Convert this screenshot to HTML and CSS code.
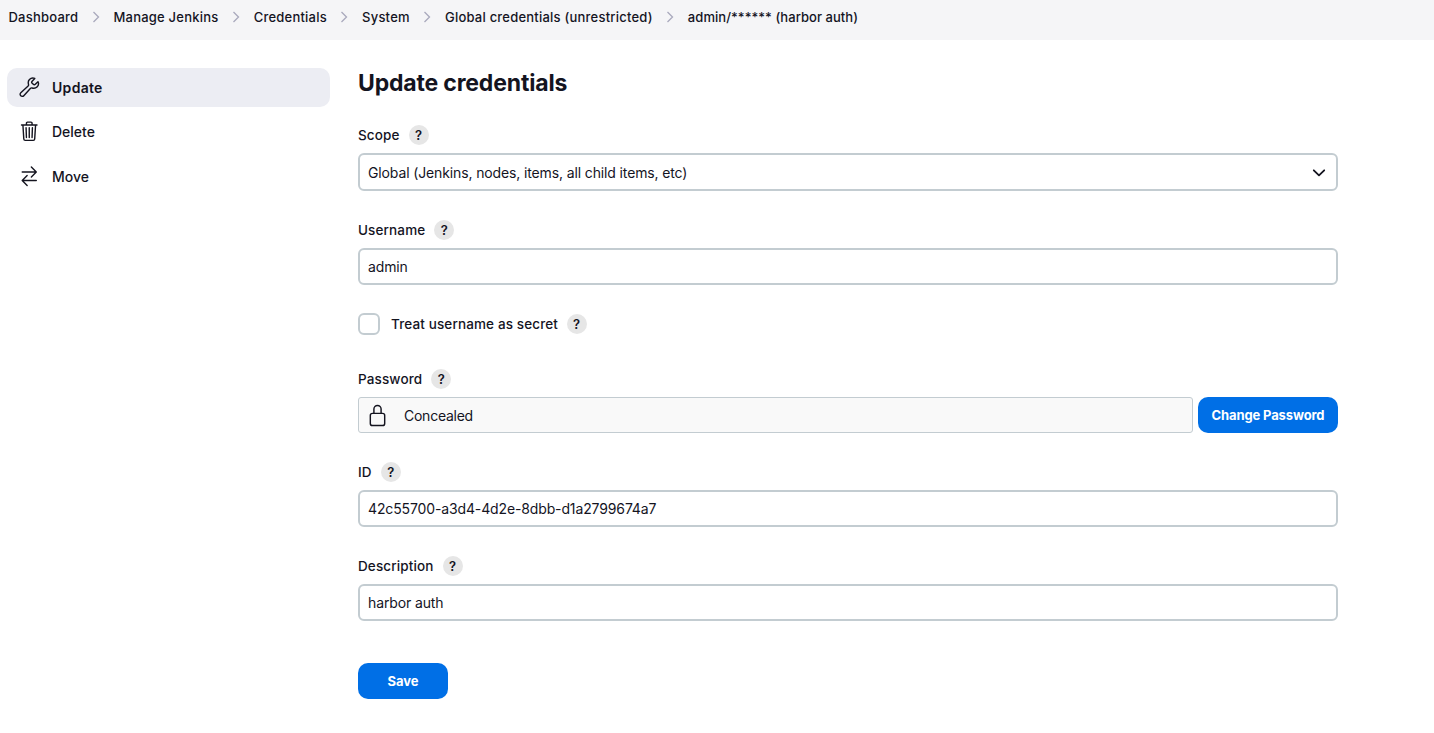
FILE: index.html
```
<!DOCTYPE html>
<html lang="en">
<head>
    <meta charset="UTF-8">
    <meta name="viewport" content="width=device-width, initial-scale=1.0">
    <title>Update credentials [Jenkins]</title>
    <link rel="stylesheet" href="styles.css">
</head>
<body>
    <nav class="breadcrumbs">
        <a href="#">Dashboard</a>
        <svg class="separator" viewBox="0 0 8 12"><path d="M1.5 1l5 5-5 5"/></svg>
        <a href="#">Manage Jenkins</a>
        <svg class="separator" viewBox="0 0 8 12"><path d="M1.5 1l5 5-5 5"/></svg>
        <a href="#">Credentials</a>
        <svg class="separator" viewBox="0 0 8 12"><path d="M1.5 1l5 5-5 5"/></svg>
        <a href="#">System</a>
        <svg class="separator" viewBox="0 0 8 12"><path d="M1.5 1l5 5-5 5"/></svg>
        <a href="#">Global credentials (unrestricted)</a>
        <svg class="separator" viewBox="0 0 8 12"><path d="M1.5 1l5 5-5 5"/></svg>
        <a class="current" href="#">admin/****** (harbor auth)</a>
    </nav>

    <div class="page-body">
        <aside class="side-panel">
            <a class="task task-active" href="#">
                <svg class="icon" viewBox="0 0 512 512"><path d="M393.87 190a32.1 32.1 0 01-45.25 0l-26.57-26.57a32.09 32.09 0 010-45.26L382.19 58a1 1 0 00-.3-1.64c-38.82-16.64-89.15-8.16-121.11 23.57-30.58 30.35-32.32 76-21.12 115.84a31.93 31.93 0 01-9.06 32.08L64 380a48.17 48.17 0 1068 68l153.86-167a31.93 31.93 0 0131.6-9.13c39.54 10.59 84.54 8.6 114.72-21.19 32.49-32 39.5-88.56 23.75-120.93a1 1 0 00-1.6-.26z"/></svg>
                <span>Update</span>
            </a>
            <a class="task" href="#">
                <svg class="icon" viewBox="0 0 512 512"><path d="M112 112l20 320c.95 18.49 14.4 32 32 32h184c17.67 0 30.87-13.51 32-32l20-320M80 112h352M192 112V72a23.93 23.93 0 0124-24h80a23.93 23.93 0 0124 24v40M256 176v224M184 176l8 224M328 176l-8 224"/></svg>
                <span>Delete</span>
            </a>
            <a class="task" href="#">
                <svg class="icon" viewBox="0 0 512 512"><path d="M304 48l112 112-112 112M398.87 160H96M208 464L96 352l112-112M114 352h302"/></svg>
                <span>Move</span>
            </a>
        </aside>

        <main class="main-panel">
            <h1>Update credentials</h1>
            <form onsubmit="return false">
                <div class="form-item">
                    <div class="form-label"><label for="scope">Scope</label><a class="help" href="#">?</a></div>
                    <div class="select">
                        <select id="scope" class="input">
                            <option>Global (Jenkins, nodes, items, all child items, etc)</option>
                        </select>
                        <svg class="chevron" viewBox="0 0 14 10"><path d="M1.8 2.3L7 7.4l5.2-5.1"/></svg>
                    </div>
                </div>
                <div class="form-item">
                    <div class="form-label"><label for="username">Username</label><a class="help" href="#">?</a></div>
                    <input id="username" class="input" type="text" value="admin">
                </div>
                <div class="form-item form-check">
                    <input id="secret" class="checkbox" type="checkbox">
                    <label class="secret-label" for="secret">Treat username as secret</label>
                    <a class="help" href="#">?</a>
                </div>
                <div class="form-item">
                    <div class="form-label"><span>Password</span><a class="help" href="#">?</a></div>
                    <div class="password-row">
                        <div class="concealed">
                            <svg class="icon" viewBox="0 0 512 512"><path d="M336 208v-95a80 80 0 00-160 0v95"/><rect x="96" y="208" width="320" height="272" rx="48"/></svg>
                            <span>Concealed</span>
                        </div>
                        <button class="button change-button" type="button">Change Password</button>
                    </div>
                </div>
                <div class="form-item">
                    <div class="form-label"><label for="id">ID</label><a class="help" href="#">?</a></div>
                    <input id="id" class="input" type="text" value="42c55700-a3d4-4d2e-8dbb-d1a2799674a7">
                </div>
                <div class="form-item">
                    <div class="form-label"><label for="description">Description</label><a class="help" href="#">?</a></div>
                    <input id="description" class="input" type="text" value="harbor auth">
                </div>
                <button class="button save-button" type="submit">Save</button>
            </form>
        </main>
    </div>
</body>
</html>
```
FILE: styles.css
```
* {
    box-sizing: border-box;
}

body {
    margin: 0;
    background: #fff;
    color: #14141f;
    font-family: Inter, "Liberation Sans", sans-serif;
    font-size: 14px;
    line-height: 20px;
}

a {
    color: inherit;
    text-decoration: none;
}

.breadcrumbs {
    display: flex;
    align-items: center;
    height: 40px;
    padding: 0 8.5px 6px;
    background: #f5f5f7;
    font-size: 13px;
    font-weight: 500;
    letter-spacing: 0.22px;
    white-space: nowrap;
}

.breadcrumbs .current {
    letter-spacing: 0.05px;
}

.separator {
    flex: none;
    width: 8px;
    height: 12px;
    margin: 0 13.6px;
    fill: none;
    stroke: #a9a9bd;
    stroke-width: 1.3;
}

.page-body {
    display: flex;
    padding: 28px 96px 0 7px;
}

.side-panel {
    width: 323px;
    margin-right: 28px;
}

.task {
    display: flex;
    align-items: center;
    gap: 12px;
    height: 39px;
    margin-bottom: 5.5px;
    padding: 0 10.5px;
    border-radius: 10px;
    font-weight: 500;
}

.task-active {
    background: #ecedf3;
    font-weight: 600;
    letter-spacing: 0.3px;
}

.icon {
    flex: none;
    width: 23px;
    height: 23px;
    fill: none;
    stroke: currentColor;
    stroke-width: 32;
    stroke-linecap: round;
    stroke-linejoin: round;
}

.task .icon {
    width: 22.5px;
    height: 22.5px;
    margin-bottom: 1px;
}

.main-panel {
    flex: 1;
}

h1 {
    margin: 0 0 27px;
    font-size: 23px;
    font-weight: 700;
    letter-spacing: -0.17px;
    line-height: 30px;
}

.form-item {
    margin-bottom: 29px;
}

.form-label {
    display: flex;
    align-items: center;
    gap: 9px;
    height: 20px;
    margin-bottom: 8px;
    font-size: 13.5px;
    font-weight: 500;
    letter-spacing: 0.13px;
}

.help {
    width: 20px;
    height: 20px;
    border-radius: 50%;
    background: #e6e6e6;
    font-size: 13px;
    font-weight: 600;
    letter-spacing: 0;
    text-align: center;
}

.input {
    display: block;
    width: 100%;
    height: 37px;
    padding: 0 8px;
    border: 2px solid #c3ccd1;
    border-radius: 6px;
    background: #fff;
    color: inherit;
    font: inherit;
    letter-spacing: -0.13px;
}

.select {
    display: grid;
    align-items: center;
}

.select .input {
    grid-area: 1 / 1;
    height: 38px;
    padding-top: 2px;
    appearance: none;
}

.chevron {
    grid-area: 1 / 1;
    justify-self: end;
    width: 14px;
    height: 10px;
    margin: 1px 12px 0 0;
    fill: none;
    stroke: #14141f;
    stroke-width: 1.8;
    stroke-linecap: round;
    stroke-linejoin: round;
    pointer-events: none;
}

.form-check {
    display: flex;
    align-items: center;
    height: 22px;
    margin: -1px 0 34px;
    font-size: 13.5px;
    font-weight: 500;
    letter-spacing: 0.13px;
}

.checkbox {
    width: 22px;
    height: 22px;
    margin: 0 11px 0 0;
    border: 2px solid #c3ccd1;
    border-radius: 6px;
    background: #fff;
    appearance: none;
}

.secret-label {
    margin-right: 8.5px;
}

.password-row {
    display: flex;
    gap: 5px;
}

.concealed {
    display: flex;
    flex: 1;
    align-items: center;
    gap: 15px;
    height: 36px;
    padding: 1px 7px 0;
    border: 1px solid #c3ccd1;
    border-radius: 3px;
    background: #f9f9f9;
    letter-spacing: -0.25px;
}

.concealed .icon {
    margin-bottom: 1px;
}

.button {
    height: 36px;
    padding: 0;
    border: none;
    border-radius: 10px;
    background: #006fe6;
    color: #fff;
    font-family: inherit;
    font-size: 13px;
    font-weight: 700;
}

.change-button {
    width: 140px;
    letter-spacing: -0.13px;
}

.save-button {
    width: 90px;
    margin-top: 13px;
}
```
